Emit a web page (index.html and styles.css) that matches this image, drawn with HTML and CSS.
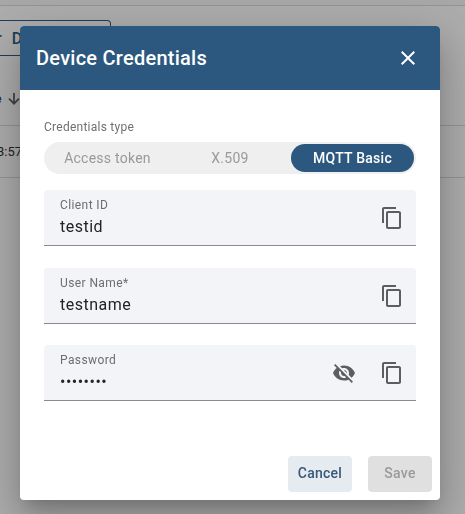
FILE: index.html
```html
<!DOCTYPE html>
<html lang="en">
<head>
<meta charset="utf-8">
<title>Device Credentials</title>
<link rel="stylesheet" href="styles.css">
</head>
<body>
<svg class="sprite" aria-hidden="true">
  <symbol id="copy" viewBox="0 0 24 24"><path d="M16 1H4c-1.100 0-2 .9-2 2v14h2V3h12V1zm3 4H8c-1.100 0-2 .9-2 2v14c0 1.100.9 2 2 2h11c1.100 0 2-.9 2-2V7c0-1.100-.9-2-2-2zm0 16H8V7h11v14z"/></symbol>
  <symbol id="hidden-eye" viewBox="0 0 24 24"><path d="M12 7c2.760 0 5 2.240 5 5 0 .65-.13 1.260-.36 1.830l2.920 2.920c1.510-1.260 2.700-2.890 3.430-4.750-1.730-4.390-6-7.500-11-7.500-1.400 0-2.740.25-3.980.7l2.160 2.160C10.740 7.130 11.350 7 12 7zM2 4.270l2.280 2.280.46.46C3.080 8.300 1.780 10.020 1 12c1.730 4.390 6 7.500 11 7.500 1.550 0 3.030-.3 4.380-.84l.42.42L19.730 22 21 20.730 3.270 3 2 4.270zM7.530 9.800l1.550 1.550c-.05.21-.08.43-.08.65 0 1.660 1.340 3 3 3 .22 0 .44-.03.65-.08l1.550 1.550c-.67.33-1.410.53-2.200.53-2.760 0-5-2.240-5-5 0-.79.2-1.530.53-2.200zm4.310-.78l3.150 3.150.02-.16c0-1.660-1.340-3-3-3l-.17.01z"/></symbol>
</svg>
<div class="page">
  <div class="topbar"></div>
  <div class="toolbar"><div class="filter"><span>r</span><span class="filter-name">D</span></div></div>
  <div class="head-row"><span>e</span>
    <svg width="12" height="12" viewBox="0 0 12 12"><path d="M6 0v10.500M1 5.700l5 5 5-5"/></svg>
  </div>
  <div class="data-row">3:57</div>
</div>
<div class="overlay">
  <section class="dialog">
    <header class="dialog-header">
      <h1>Device Credentials</h1>
      <svg class="close" viewBox="0 0 24 24"><path d="M19 6.410L17.590 5 12 10.590 6.410 5 5 6.410 10.590 12 5 17.590 6.410 19 12 13.410 17.590 19 19 17.590 13.410 12z"/></svg>
    </header>
    <div class="content">
      <div class="type-label">Credentials type</div>
      <div class="toggle">
        <span class="option token">Access token</span>
        <span class="option x509">X.509</span>
        <span class="option selected">MQTT Basic</span>
      </div>
      <div class="field">
        <div class="text"><div class="label">Client ID</div><div class="value">testid</div></div>
        <svg class="icon"><use href="#copy"/></svg>
      </div>
      <div class="field">
        <div class="text"><div class="label">User Name*</div><div class="value">testname</div></div>
        <svg class="icon"><use href="#copy"/></svg>
      </div>
      <div class="field password">
        <div class="text"><div class="label">Password</div><div class="value dots">••••••••</div></div>
        <svg class="icon"><use href="#hidden-eye"/></svg>
        <svg class="icon"><use href="#copy"/></svg>
      </div>
    </div>
    <footer class="actions">
      <div class="button cancel">Cancel</div>
      <div class="button save">Save</div>
    </footer>
  </section>
</div>
</body>
</html>
```
FILE: styles.css
```css
* { box-sizing: border-box; }
body {
  margin: 0;
  height: 514px;
  overflow: hidden;
  background: #adadad;
  font-family: Roboto, "Liberation Sans", sans-serif;
  color: #222;
}
.sprite { position: absolute; width: 0; height: 0; }
.page { height: 514px; }
.topbar { height: 6px; background: #a8a8a8; border-bottom: 1px solid #949494; }
.toolbar { height: 67px; padding-top: 14px; }
.filter {
  display: flex;
  align-items: center;
  gap: 10px;
  width: 111px;
  height: 36px;
  border: 1px solid #203d59;
  border-left: 0;
  border-radius: 0 4px 4px 0;
  font-size: 16px;
  font-weight: 500;
  color: #203d59;
}
.filter span:first-child { margin-left: -4px; }
.head-row {
  display: flex;
  align-items: center;
  gap: 7px;
  height: 53px;
  margin-left: -5px;
  border-bottom: 1px solid #949494;
  font-size: 12px;
  font-weight: 500;
}
.head-row svg { fill: none; stroke: #444; stroke-width: 1.8; }
.data-row {
  height: 52px;
  text-indent: -3px;
  line-height: 51px;
  border-bottom: 1px solid #949494;
  font-size: 13px;
}
.overlay {
  position: fixed;
  inset: 0;
  padding: 26px 25px 14px 20px;
}
.dialog {
  display: flex;
  flex-direction: column;
  height: 474px;
  background: #fff;
  border-radius: 4px;
  box-shadow: 0 11px 15px -7px rgba(0,0,0,.2), 0 24px 38px 3px rgba(0,0,0,.14), 0 9px 46px 8px rgba(0,0,0,.12);
}
.dialog-header {
  display: flex;
  align-items: center;
  justify-content: space-between;
  height: 64px;
  padding: 0 20px 0 16px;
  background: #2c587f;
  border-radius: 4px 4px 0 0;
  color: #fff;
}
h1 { margin: 0; font-size: 20px; font-weight: 500; letter-spacing: .25px; line-height: 32px; }
.close { width: 24px; height: 24px; fill: #fff; }
.content { flex: 1; padding: 29px 24px 0; }
.type-label { height: 23px; font-size: 12px; line-height: 16px; letter-spacing: .25px; color: #707070; }
.toggle {
  display: flex;
  align-items: center;
  height: 32px;
  margin-bottom: 16px;
  padding: 2px;
  border-radius: 16px;
  background: #efefef;
}
.option {
  height: 28px;
  border-radius: 14px;
  font-size: 14px;
  line-height: 28px;
  letter-spacing: .25px;
  text-align: center;
  color: #999;
}
.token { width: 123px; }
.x509 { width: 122px; }
.selected { width: 123px; background: #2c587f; color: #fff; font-weight: 500; }
.field {
  display: flex;
  gap: 24px;
  height: 56px;
  margin-bottom: 22px;
  padding: 0 12px 0 16px;
  background: #f3f4f8;
  border-bottom: 1px solid #898a8e;
  border-radius: 4px 4px 0 0;
}
.field.password { margin-top: -1px; }
.text { flex: 1; padding-top: 7px; }
.label { font-size: 12px; line-height: 16px; letter-spacing: .4px; color: #6c6d71; }
.value { font-size: 16px; line-height: 24px; letter-spacing: .5px; margin-top: 2px; color: #222326; }
.icon { width: 24px; height: 24px; margin-top: 16px; fill: #5c5d60; }
.actions { display: flex; justify-content: flex-end; gap: 16px; padding: 8px; }
.button {
  width: 64px;
  height: 36px;
  border-radius: 4px;
  font-size: 14px;
  font-weight: 500;
  line-height: 35px;
  letter-spacing: .25px;
  text-align: center;
}
.cancel { background: #e6ebf0; color: #36587b; }
.save { background: #e0e0e0; color: #9a9a9a; }
```
